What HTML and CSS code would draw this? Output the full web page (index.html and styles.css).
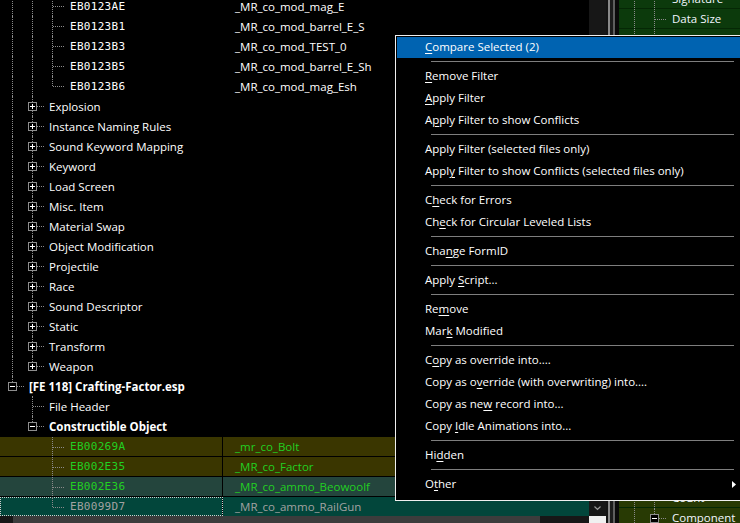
FILE: index.html
```html
<!DOCTYPE html>
<html>
<head>
<meta charset="utf-8">
<link rel="stylesheet" href="styles.css">
</head>
<body>
<div class="app">
  <div class="left">
    <div class="tree">
      <div class="rows">
        <div class="row"><div class="c1"><span class="g v"></span><span class="g v"></span><span class="g t"></span><span class="id">EB0123AE</span></div><div class="c2">_MR_co_mod_mag_E</div></div>
        <div class="row"><div class="c1"><span class="g v"></span><span class="g v"></span><span class="g t"></span><span class="id">EB0123B1</span></div><div class="c2">_MR_co_mod_barrel_E_S</div></div>
        <div class="row"><div class="c1"><span class="g v"></span><span class="g v"></span><span class="g t"></span><span class="id">EB0123B3</span></div><div class="c2">_MR_co_mod_TEST_0</div></div>
        <div class="row"><div class="c1"><span class="g v"></span><span class="g v"></span><span class="g t"></span><span class="id">EB0123B5</span></div><div class="c2">_MR_co_mod_barrel_E_Sh</div></div>
        <div class="row"><div class="c1"><span class="g v"></span><span class="g v"></span><span class="g l"></span><span class="id">EB0123B6</span></div><div class="c2">_MR_co_mod_mag_Esh</div></div>
        <div class="row"><div class="c1"><span class="g v"></span><span class="g t"><span class="bx plus"></span></span><span class="lbl">Explosion</span></div><div class="c2"></div></div>
        <div class="row"><div class="c1"><span class="g v"></span><span class="g t"><span class="bx plus"></span></span><span class="lbl">Instance Naming Rules</span></div><div class="c2"></div></div>
        <div class="row"><div class="c1"><span class="g v"></span><span class="g t"><span class="bx plus"></span></span><span class="lbl">Sound Keyword Mapping</span></div><div class="c2"></div></div>
        <div class="row"><div class="c1"><span class="g v"></span><span class="g t"><span class="bx plus"></span></span><span class="lbl">Keyword</span></div><div class="c2"></div></div>
        <div class="row"><div class="c1"><span class="g v"></span><span class="g t"><span class="bx plus"></span></span><span class="lbl">Load Screen</span></div><div class="c2"></div></div>
        <div class="row"><div class="c1"><span class="g v"></span><span class="g t"><span class="bx plus"></span></span><span class="lbl">Misc. Item</span></div><div class="c2"></div></div>
        <div class="row"><div class="c1"><span class="g v"></span><span class="g t"><span class="bx plus"></span></span><span class="lbl">Material Swap</span></div><div class="c2"></div></div>
        <div class="row"><div class="c1"><span class="g v"></span><span class="g t"><span class="bx plus"></span></span><span class="lbl">Object Modification</span></div><div class="c2"></div></div>
        <div class="row"><div class="c1"><span class="g v"></span><span class="g t"><span class="bx plus"></span></span><span class="lbl">Projectile</span></div><div class="c2"></div></div>
        <div class="row"><div class="c1"><span class="g v"></span><span class="g t"><span class="bx plus"></span></span><span class="lbl">Race</span></div><div class="c2"></div></div>
        <div class="row"><div class="c1"><span class="g v"></span><span class="g t"><span class="bx plus"></span></span><span class="lbl">Sound Descriptor</span></div><div class="c2"></div></div>
        <div class="row"><div class="c1"><span class="g v"></span><span class="g t"><span class="bx plus"></span></span><span class="lbl">Static</span></div><div class="c2"></div></div>
        <div class="row"><div class="c1"><span class="g v"></span><span class="g t"><span class="bx plus"></span></span><span class="lbl">Transform</span></div><div class="c2"></div></div>
        <div class="row"><div class="c1"><span class="g v"></span><span class="g l"><span class="bx plus"></span></span><span class="lbl">Weapon</span></div><div class="c2"></div></div>
        <div class="row"><div class="c1"><span class="g l"><span class="bx"></span></span><span class="lbl b">[FE 118] Crafting-Factor.esp</span></div><div class="c2"></div></div>
        <div class="row"><div class="c1"><span class="g"></span><span class="g t"></span><span class="lbl">File Header</span></div><div class="c2"></div></div>
        <div class="row"><div class="c1"><span class="g"></span><span class="g l"><span class="bx"></span></span><span class="lbl b">Constructible Object</span></div><div class="c2"></div></div>
        <div class="row hl olive green"><div class="c1"><span class="g"></span><span class="g"></span><span class="g t"></span><span class="id">EB00269A</span></div><div class="c2">_mr_co_Bolt</div></div>
        <div class="row hl olive green"><div class="c1"><span class="g"></span><span class="g"></span><span class="g t"></span><span class="id">EB002E35</span></div><div class="c2">_MR_co_Factor</div></div>
        <div class="row hl slate green"><div class="c1"><span class="g"></span><span class="g"></span><span class="g t"></span><span class="id">EB002E36</span></div><div class="c2">_MR_co_ammo_Beowoolf</div></div>
        <div class="row hl teal gray focus"><div class="c1"><span class="g"></span><span class="g"></span><span class="g l"></span><span class="id">EB0099D7</span></div><div class="c2">_MR_co_ammo_RailGun</div></div>
      </div>
    </div>
    <div class="hscroll"><div class="hs-btn"></div><div class="hs-thumb"></div><div class="hs-track"></div></div>
  </div>
  <div class="vscroll">
    <div class="vs-fill"></div>
    <div class="vs-down"><svg width="7" height="5" viewBox="0 0 7 5"><polyline points="0.5,0.5 3.5,3.5 6.5,0.5" fill="none" stroke="#9a9a9a" stroke-width="1.2"/></svg></div>
    <div class="vs-corner"></div>
  </div>
  <div class="splitter"></div>
  <div class="right">
    <div class="rtop">
      <div class="rrow"><span class="g v"></span><span class="g t"></span><span class="rl">Signature</span></div>
      <div class="rrow"><span class="g v"></span><span class="g t"></span><span class="rl">Data Size</span></div>
      <div class="rrow"><span class="g v"></span><span class="g t"></span><span class="rl">Record Flags</span></div>
    </div>
    <div class="rfill"></div>
    <div class="rbot">
      <div class="rrow"><span class="g v"></span><span class="g t"></span><span class="rl">Count</span></div>
      <div class="rrow"><span class="g v"></span><span class="g l"><span class="bx"></span></span><span class="rl">Component</span></div>
    </div>
  </div>
</div>

<div class="menu">
  <div class="mi hl"><u>C</u>ompare Selected (2)</div>
  <div class="sep"></div>
  <div class="mi"><u>R</u>emove Filter</div>
  <div class="mi"><u>A</u>pply Filter</div>
  <div class="mi">A<u>p</u>ply Filter to show Conflicts</div>
  <div class="sep"></div>
  <div class="mi">Apply Filter (selected files only)</div>
  <div class="mi">Appl<u>y</u> Filter to show Conflicts (selected files only)</div>
  <div class="sep"></div>
  <div class="mi">C<u>h</u>eck for Errors</div>
  <div class="mi">Ch<u>e</u>ck for Circular Leveled Lists</div>
  <div class="sep"></div>
  <div class="mi">Cha<u>n</u>ge FormID</div>
  <div class="sep"></div>
  <div class="mi">Apply <u>S</u>cript...</div>
  <div class="sep"></div>
  <div class="mi">Re<u>m</u>ove</div>
  <div class="mi">Mar<u>k</u> Modified</div>
  <div class="sep"></div>
  <div class="mi">C<u>o</u>py as override into....</div>
  <div class="mi">Copy as o<u>v</u>erride (with overwriting) into....</div>
  <div class="mi">Copy as ne<u>w</u> record into...</div>
  <div class="mi">Copy <u>I</u>dle Animations into...</div>
  <div class="sep"></div>
  <div class="mi">Hi<u>d</u>den</div>
  <div class="sep"></div>
  <div class="mi">O<u>t</u>her<svg class="arrow" width="4" height="7" viewBox="0 0 4 7"><polygon points="0,0 4,3.5 0,7" fill="#fff"/></svg></div>
</div>
</body>
</html>
```

FILE: styles.css
```css
* { box-sizing: border-box; }
html, body { margin: 0; padding: 0; }
body {
  width: 740px;
  height: 523px;
  overflow: hidden;
  background: #000;
  color: #fff;
  font-family: "Open Sans", "Noto Sans", sans-serif;
  font-size: 11.5px;
  position: relative;
}
.app { display: flex; height: 523px; }

/* left tree pane */
.left { width: 589px; flex: none; display: flex; flex-direction: column; }
.tree { height: 516px; flex: none; overflow: hidden; }
.rows { margin-top: -4px; display: flex; flex-direction: column; }
.row { display: flex; height: 20px; flex: none; }
.c1 {
  width: 223px;
  flex: none;
  display: flex;
  align-items: center;
  padding-left: 2px;
  border-right: 1px solid transparent;
  white-space: nowrap;
}
.c2 { flex: 1; display: flex; align-items: center; padding-left: 12px; white-space: nowrap; }

.g { width: 20px; height: 100%; flex: none; position: relative; }
.g.v::before, .g.t::before, .g.l::before {
  content: "";
  position: absolute;
  left: 10px; top: 0; bottom: 0;
  border-left: 1px dotted #8a8a8a;
}
.g.l::before { bottom: auto; height: 10px; }
.g.t::after, .g.l::after {
  content: "";
  position: absolute;
  left: 11px; top: 10px;
  width: 11px;
  border-top: 1px dotted #8a8a8a;
}
.bx {
  position: absolute;
  left: 6px; top: 6px;
  width: 9px; height: 9px;
  border: 1px solid #8e8e8e;
  background: #000;
  z-index: 1;
}
.bx::before {
  content: "";
  position: absolute;
  left: 1px; top: 3px;
  width: 5px; height: 1px;
  background: #fff;
}
.bx.plus::after {
  content: "";
  position: absolute;
  left: 3px; top: 1px;
  width: 1px; height: 5px;
  background: #fff;
}
.lbl { padding-left: 7px; }
.b { font-weight: 700; }
.id { font-family: "DejaVu Sans Mono", monospace; font-size: 11px; letter-spacing: 0.3px; padding-left: 8px; }

.row.hl { border-top: 1px solid #000; }
.row.hl .c1 { border-right-color: #000; }
.olive { background: #3a3600; }
.slate { background: #24453d; }
.teal { background: #02463b; }
.green { color: #22d022; }
.gray { color: #a2a2a2; }
.focus .c1 { outline: 1px dotted #cfcfcf; outline-offset: -1px; }

.hscroll { height: 17px; flex: none; display: flex; background: #171717; }
.hs-btn { width: 13px; flex: none; }
.hs-thumb { width: 527px; flex: none; background: #3c3c3c; }
.hs-track { flex: 1; }

.vscroll { width: 17px; flex: none; background: #171717; display: flex; flex-direction: column; }
.vs-fill { flex: 1; }
.vs-down { height: 16px; flex: none; display: flex; align-items: center; justify-content: center; }
.vs-down svg { display: block; }
.vs-corner { height: 7px; flex: none; background: #f0f0f0; }

.splitter {
  width: 13px;
  flex: none;
  background: linear-gradient(to right, #141414 0 2px, #8a8a8a 2px 4px, #1c1c1c 4px 7px, #5e5e5e 7px 9px, #0a0a0a 9px 13px);
}

/* right pane */
.right { flex: 1; display: flex; flex-direction: column; overflow: hidden; background: #0c3a0c; }
.rtop { margin-top: -12px; background: #0c3a0c; }
.rfill { flex: 1; }
.rbot { margin-bottom: -4px; background: #283a04; }
.rrow {
  display: flex;
  height: 20px;
  align-items: center;
  padding-left: 5px;
  border-top: 1px solid #052805;
  white-space: nowrap;
  color: #f2f6ff;
}
.rl { padding-left: 8px; }

/* context menu */
.menu {
  position: absolute;
  left: 395px;
  top: 35px;
  width: 347px;
  background: #000;
  border: 1px solid #f0f0f0;
  padding: 0 0 5px 0;
  z-index: 10;
}
.mi {
  height: 22px;
  line-height: 22px;
  padding-left: 29px;
  white-space: nowrap;
  position: relative;
  color: #fff;
}
.mi u { text-decoration-thickness: 1px; text-underline-offset: 2px; }
.mi.hl { background: #0063b1; box-shadow: inset 1px 1px 0 #000; }
.sep { height: 7px; padding-top: 3px; margin: 0 7px 0 35px; }
.sep::before { content: ""; display: block; height: 1px; background: #7e7e7e; }
.arrow { position: absolute; right: 5px; top: 8px; display: block; }
```
